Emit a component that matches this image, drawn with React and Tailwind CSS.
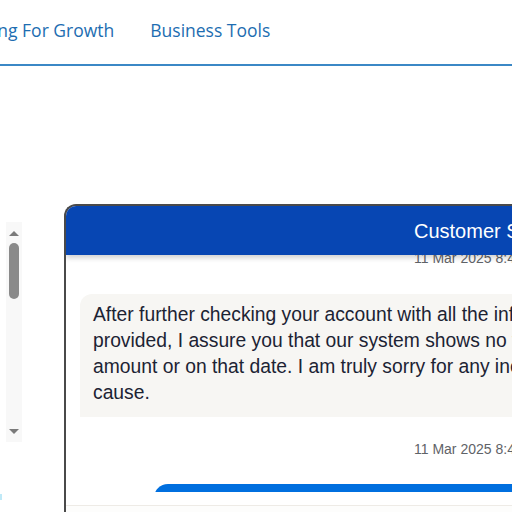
import React from "react";

const Timestamp = ({ children, className = "" }) => (
  <div className={`pl-[348px] text-[14px] leading-[18px] text-[#5f6368] whitespace-nowrap ${className}`}>
    {children}
  </div>
);

const lines = [
  "After further checking your account with all the information you",
  "provided, I assure you that our system shows no transaction for that",
  "amount or on that date. I am truly sorry for any inconvenience this may",
  "cause.",
];

export default function App() {
  return (
    <div className="w-[512px] h-[512px] overflow-hidden bg-white relative font-['Liberation_Sans',Arial,sans-serif]">
      {/* top navigation */}
      <nav className="h-[66px] border-b-2 border-[#3b88c6] flex items-center gap-[36px] pb-[3px] font-['Open_Sans',sans-serif] text-[17.5px] text-[#1d6db1] whitespace-nowrap">
        <span className="-ml-[65px]">Marketing For Growth</span>
        <span>Business Tools</span>
      </nav>

      <div className="flex items-start">
        {/* side list scrollbar */}
        <div className="w-[64px] shrink-0 flex">
          <div className="ml-[6px] mt-[156px] w-[16px] h-[220px] bg-[#f8f8f8] flex flex-col items-center pt-[9px] pb-[8px]">
            <div className="w-0 h-0 border-x-[5px] border-x-transparent border-b-[5px] border-b-[#7a7a7a]" />
            <div className="mt-[7px] w-[10px] h-[56px] rounded-full bg-[#8a8a8a]" />
            <div className="flex-1" />
            <div className="w-0 h-0 border-x-[5px] border-x-transparent border-t-[5px] border-t-[#7a7a7a]" />
          </div>
        </div>

        {/* chat panel */}
        <div className="mt-[138px] w-[700px] shrink-0 rounded-tl-[12px] border-l-2 border-t-2 border-[#4a4a4a] overflow-hidden bg-white">
          <div className="relative z-10 h-[49px] bg-[#0746b3] flex items-center pl-[348px] shadow-[0_3px_5px_rgba(0,0,0,0.18)]">
            <span className="text-white text-[20px] whitespace-nowrap">Customer Support Chat</span>
          </div>

          <div className="h-[237px] overflow-hidden">
            <div className="-mt-[6px]">
              <Timestamp>11 Mar 2025 8:42 AM</Timestamp>
              <div className="ml-[14px] mt-[27px] rounded-tl-[12px] bg-[#f7f6f3] pl-[13px] pr-[60px] pt-[8px] pb-[11px] text-[19.3px] leading-[26px] text-[#1c2333] whitespace-nowrap">
                {lines.map((l) => (
                  <div key={l}>{l}</div>
                ))}
              </div>
              <Timestamp className="mt-[23px]">11 Mar 2025 8:45 AM</Timestamp>
              <div className="ml-[88px] mt-[26px] h-[40px] rounded-tl-[14px] bg-[#006fdf]" />
            </div>
          </div>

          <div className="mt-[13px] border-t border-[#eeebe6] h-[20px] bg-[#fdfdfc]" />
        </div>
      </div>

      <div className="absolute left-0 top-[494px] w-[2px] h-[6px] bg-[#bfe9f7]" />
    </div>
  );
}
